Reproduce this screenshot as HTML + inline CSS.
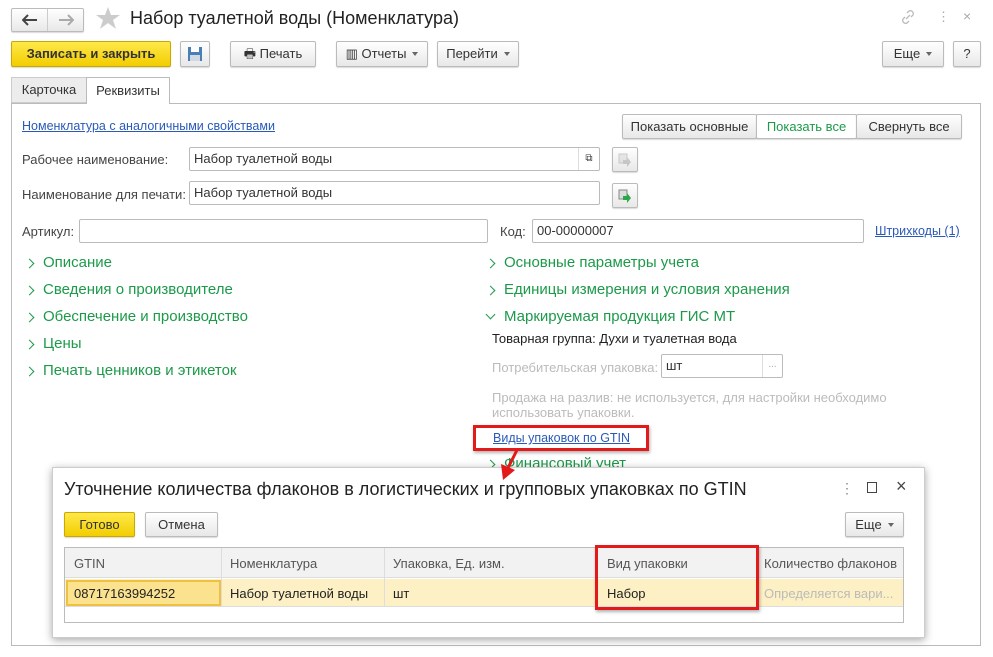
<!DOCTYPE html>
<html><head><meta charset="utf-8"><style>
*{box-sizing:border-box;margin:0;padding:0}
body{width:993px;height:657px;background:#fff;font-family:"Liberation Sans",Arial,sans-serif;font-size:13px;color:#333;position:relative;overflow:hidden}
.a{position:absolute}
.btn{position:absolute;height:25px;border:1px solid #bbb;border-radius:2px;background:linear-gradient(#fff,#e8e8e8);box-shadow:0 1px 1px rgba(0,0,0,.15);font-size:13px;line-height:23px;text-align:center;color:#333}
.yb{background:linear-gradient(#ffe94a,#f2cd00);border-color:#c9a800;font-weight:bold}
.inp{position:absolute;height:24px;border:1px solid #bbb;border-radius:2px;background:#fff;padding-left:4px;line-height:22px;font-size:13px;color:#333}
.g{position:absolute;color:#1c9a4a;font-size:15px;padding-left:19px}
.g:before{content:"";position:absolute;left:2px;top:6px;width:6px;height:6px;border-right:1.5px solid #1c9a4a;border-bottom:1.5px solid #1c9a4a;transform:rotate(-45deg)}
.g.o:before{transform:rotate(45deg);top:3px}
.lbl{position:absolute;font-size:13px;color:#444}
.dd:after{content:"";display:inline-block;margin-left:6px;border:3px solid transparent;border-top:4px solid #666;vertical-align:-1px}
</style></head><body>
<!-- nav -->
<div class="btn" style="left:11px;top:8px;width:73px;height:24px"></div>
<div class="a" style="left:47px;top:9px;width:1px;height:22px;background:#ccc"></div>
<svg class="a" style="left:22px;top:14px" width="16" height="12" viewBox="0 0 16 12"><path d="M1 6h14M6 1L1 6l5 5" stroke="#444" stroke-width="2" fill="none"/></svg>
<svg class="a" style="left:58px;top:14px" width="16" height="12" viewBox="0 0 16 12"><path d="M1 6h14M10 1l5 5-5 5" stroke="#aaa" stroke-width="2" fill="none"/></svg>
<svg class="a" style="left:96px;top:7px" width="24" height="23" viewBox="0 0 24 23"><path d="M12 0l3 8h9l-7 5 3 9-8-6-8 6 3-9-7-5h9z" fill="#ccc"/></svg>
<div class="a" style="left:130px;top:8px;font-size:18px;color:#222">Набор туалетной воды (Номенклатура)</div>
<svg class="a" style="left:900px;top:9px" width="16" height="16" viewBox="0 0 16 16"><path d="M6 10l4-4M7 4l2-2a3 3 0 014 4l-2 2M9 12l-2 2a3 3 0 01-4-4l2-2" stroke="#bbb" stroke-width="1.3" fill="none"/></svg>
<div class="a" style="left:937px;top:9px;color:#aaa;font-size:13px">⋮</div>
<div class="a" style="left:963px;top:8px;color:#aaa;font-size:14px">×</div>
<!-- toolbar -->
<div class="btn yb" style="left:11px;top:41px;width:160px;height:26px">Записать и закрыть</div>
<div class="btn" style="left:180px;top:41px;width:30px;height:26px"><svg width="16" height="16" style="margin-top:4px" viewBox="0 0 16 16"><rect x="1" y="1" width="14" height="14" fill="#4a7fb6"/><rect x="4" y="1" width="8" height="5" fill="#fff"/><rect x="3" y="9" width="10" height="6" fill="#cfd8e3"/></svg></div>
<div class="btn" style="left:230px;top:41px;width:86px;height:26px">🖶 Печать</div>
<div class="btn dd" style="left:336px;top:41px;width:92px;height:26px">▥ Отчеты</div>
<div class="btn dd" style="left:437px;top:41px;width:82px;height:26px">Перейти</div>
<div class="btn dd" style="left:882px;top:41px;width:62px;height:26px">Еще</div>
<div class="btn" style="left:953px;top:41px;width:28px;height:26px">?</div>
<!-- tabs -->
<div class="a" style="left:11px;top:77px;width:76px;height:26px;border:1px solid #ccc;background:#ececec;line-height:24px;text-align:center">Карточка</div>
<div class="a" style="left:86px;top:77px;width:84px;height:27px;border:1px solid #bbb;border-bottom:none;background:#fff;line-height:25px;text-align:center;z-index:2">Реквизиты</div>
<div class="a" style="left:11px;top:103px;width:970px;height:543px;border:1px solid #bbb"></div>
<div class="a" style="left:22px;top:119px;color:#2a5ab8;text-decoration:underline;font-size:12.5px">Номенклатура с аналогичными свойствами</div>
<div class="btn" style="left:622px;top:114px;width:135px;height:25px">Показать основные</div>
<div class="btn" style="left:756px;top:114px;width:101px;height:25px;background:#fff;color:#1c9a4a">Показать все</div>
<div class="btn" style="left:856px;top:114px;width:106px;height:25px">Свернуть все</div>
<div class="lbl" style="left:22px;top:152px">Рабочее наименование:</div>
<div class="inp" style="left:189px;top:147px;width:411px">Набор туалетной воды</div>
<div class="a" style="left:578px;top:148px;width:21px;height:22px;border-left:1px solid #ddd;font-size:10px;text-align:center;line-height:22px">⧉</div>
<div class="btn" style="left:612px;top:147px;width:26px;height:25px"><svg width="14" height="14" style="margin-top:5px;opacity:.4" viewBox="0 0 14 14"><rect x="1" y="1" width="8" height="9" fill="#ccc" stroke="#888"/><path d="M5 7h4V4l4 5-4 5v-3H5z" fill="#888"/></svg></div>
<div class="lbl" style="left:22px;top:187px">Наименование для печати:</div>
<div class="inp" style="left:189px;top:181px;width:411px">Набор туалетной воды</div>
<div class="btn" style="left:612px;top:183px;width:26px;height:25px"><svg width="14" height="14" style="margin-top:5px" viewBox="0 0 14 14"><rect x="1" y="1" width="8" height="9" fill="#ddd" stroke="#888"/><path d="M5 7h4V4l4 5-4 5v-3H5z" fill="#2ca84a"/></svg></div>
<div class="lbl" style="left:22px;top:224px">Артикул:</div>
<div class="inp" style="left:79px;top:219px;width:409px"></div>
<div class="lbl" style="left:500px;top:224px">Код:</div>
<div class="inp" style="left:532px;top:219px;width:332px">00-00000007</div>
<div class="a" style="left:875px;top:224px;color:#2a5ab8;text-decoration:underline;font-size:12.5px">Штрихкоды (1)</div>
<div class="g" style="left:24px;top:254px">Описание</div>
<div class="g" style="left:24px;top:281px">Сведения о производителе</div>
<div class="g" style="left:24px;top:308px">Обеспечение и производство</div>
<div class="g" style="left:24px;top:335px">Цены</div>
<div class="g" style="left:24px;top:362px">Печать ценников и этикеток</div>
<div class="g" style="left:485px;top:254px">Основные параметры учета</div>
<div class="g" style="left:485px;top:281px">Единицы измерения и условия хранения</div>
<div class="g o" style="left:485px;top:308px">Маркируемая продукция ГИС МТ</div>
<div class="lbl" style="left:492px;top:331px;color:#222">Товарная группа: Духи и туалетная вода</div>
<div class="lbl" style="left:492px;top:360px;color:#bbb">Потребительская упаковка:</div>
<div class="inp" style="left:661px;top:354px;width:122px">шт</div>
<div class="a" style="left:762px;top:355px;width:20px;height:22px;border-left:1px solid #ddd;color:#aaa;font-size:10px;text-align:center;line-height:20px">...</div>
<div class="lbl" style="left:492px;top:390px;color:#bbb;line-height:15px">Продажа на разлив: не используется, для настройки необходимо<br>использовать упаковки.</div>
<div class="a" style="left:473px;top:425px;width:176px;height:26px;border:3px solid #e21a1a;box-shadow:1px 2px 3px rgba(0,0,0,.3)"></div>
<div class="a" style="left:493px;top:431px;color:#2a5ab8;text-decoration:underline;font-size:12.5px">Виды упаковок по GTIN</div>
<div class="g" style="left:485px;top:455px">Финансовый учет</div>
<!-- dialog -->
<div class="a" style="left:52px;top:467px;width:873px;height:171px;background:#fff;border:1px solid #ccc;box-shadow:0 2px 8px rgba(0,0,0,.35)"></div>
<div class="a" style="left:64px;top:479px;font-size:18px;color:#222">Уточнение количества флаконов в логистических и групповых упаковках по GTIN</div>
<div class="a" style="left:840px;top:480px;color:#888;font-size:14px">⋮</div>
<div class="a" style="left:867px;top:482px;width:10px;height:11px;border:1px solid #444"></div>
<div class="a" style="left:896px;top:476px;color:#444;font-size:18px">×</div>
<div class="btn yb" style="left:64px;top:512px;width:71px;height:25px;font-weight:normal">Готово</div>
<div class="btn" style="left:145px;top:512px;width:73px;height:25px">Отмена</div>
<div class="btn dd" style="left:845px;top:512px;width:59px;height:25px">Еще</div>
<div class="a" style="left:64px;top:547px;width:840px;height:76px;border:1px solid #bbb"></div>
<div class="a" style="left:65px;top:548px;width:838px;height:30px;background:#f2f2f2;border-bottom:1px solid #ddd"></div>
<div class="a" style="left:65px;top:579px;width:838px;height:28px;background:#fcf0c4;border-bottom:1px solid #ddd"></div>
<div class="a" style="left:66px;top:580px;width:155px;height:26px;background:#fbe28f;border:2px solid #f0c040"></div>
<div class="a" style="left:221px;top:548px;width:1px;height:59px;background:#ddd"></div>
<div class="a" style="left:384px;top:548px;width:1px;height:59px;background:#ddd"></div>
<div class="a" style="left:757px;top:548px;width:1px;height:59px;background:#ddd"></div>
<div class="lbl" style="left:74px;top:556px;color:#555">GTIN</div>
<div class="lbl" style="left:230px;top:556px;color:#555">Номенклатура</div>
<div class="lbl" style="left:393px;top:556px;color:#555">Упаковка, Ед. изм.</div>
<div class="lbl" style="left:607px;top:556px;color:#555">Вид упаковки</div>
<div class="lbl" style="left:764px;top:556px;color:#555">Количество флаконов</div>
<div class="lbl" style="left:74px;top:586px;color:#222">08717163994252</div>
<div class="lbl" style="left:230px;top:586px;color:#222">Набор туалетной воды</div>
<div class="lbl" style="left:393px;top:586px;color:#222">шт</div>
<div class="lbl" style="left:607px;top:586px;color:#222">Набор</div>
<div class="lbl" style="left:764px;top:586px;color:#bbb">Определяется вари...</div>
<div class="a" style="left:595px;top:545px;width:164px;height:65px;border:3px solid #e21a1a;box-shadow:1px 2px 3px rgba(0,0,0,.3)"></div>
<svg class="a" style="left:495px;top:448px" width="30" height="36" viewBox="0 0 30 36"><path d="M22 2 L12 22" stroke="#e21a1a" stroke-width="3"/><path d="M6 16 L8 32 L20 22 Z" fill="#e21a1a"/></svg>
</body></html>
